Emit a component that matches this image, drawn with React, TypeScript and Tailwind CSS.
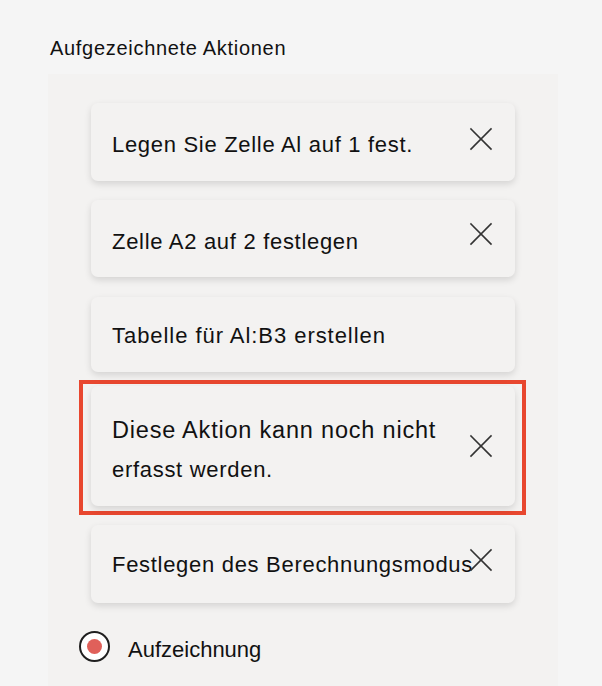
import React from "react";

const XIcon = () => (
  <svg width="24" height="24" viewBox="0 0 24 24" fill="none" stroke="#333" strokeWidth="1.6" strokeLinecap="square">
    <line x1="2" y1="2" x2="22" y2="22" />
    <line x1="22" y1="2" x2="2" y2="22" />
  </svg>
);

function Card({
  h,
  children,
  x = true,
  xTop,
  textPt,
}: {
  h: string;
  children: React.ReactNode;
  x?: boolean;
  xTop: string;
  textPt: string;
}) {
  return (
    <div
      className={`relative w-[424px] ${h} rounded-[7px] bg-[#f3f2f1] shadow-[0_3px_7px_rgba(0,0,0,0.13)]`}
    >
      <div className={`pl-[21px] ${textPt} text-[22px] tracking-[0.7px] text-[#111] whitespace-nowrap`}>{children}</div>
      {x && (
        <div className={`absolute right-[22px] ${xTop}`}>
          <XIcon />
        </div>
      )}
    </div>
  );
}

export default function App() {
  return (
    <div
      className="min-h-[686px] bg-[#f5f5f5] pt-[36px] pl-[48px] overflow-hidden"
      style={{ fontFamily: '"Liberation Sans", Arial, sans-serif' }}
    >
      <div className="pl-[2px] text-[20px] leading-[24px] tracking-[0.7px] text-[#111]">Aufgezeichnete Aktionen</div>
      <div className="mt-[14px] w-[510px] h-[612px] bg-[#f3f2f1] pt-[29px]">
        <div className="ml-[43px]">
          <Card h="h-[78px]" xTop="top-[24px]" textPt="pt-[28px] leading-[28px]">
            Legen Sie Zelle Al auf 1 fest.
          </Card>
        </div>
        <div className="ml-[43px] mt-[19px]">
          <Card h="h-[77px]" xTop="top-[22px]" textPt="pt-[28px] leading-[28px]">
            Zelle A2 auf 2 festlegen
          </Card>
        </div>
        <div className="ml-[43px] mt-[20px]">
          <Card h="h-[75px]" x={false} xTop="" textPt="pt-[25px] leading-[28px]">
            <span className="tracking-[0.95px]">Tabelle für Al:B3 erstellen</span>
          </Card>
        </div>
        <div className="ml-[31px] mt-[8px] w-[447px] border-4 border-[#e8472f] pt-[2px] pb-[5px] pl-[8px]">
          <Card h="h-[120px]" xTop="top-[48px]" textPt="pt-[25px] leading-[39px]">
            <span className="text-[23.5px] tracking-[0.8px]">Diese Aktion kann noch nicht</span>
            <br />
            erfasst werden.
          </Card>
        </div>
        <div className="ml-[43px] mt-[10px]">
          <Card h="h-[78px]" xTop="top-[23px]" textPt="pt-[26px] leading-[28px]">
            Festlegen des Berechnungsmodus
          </Card>
        </div>
        <div className="ml-[31px] mt-[25px] flex items-center">
          <div className="w-[31px] h-[31px] rounded-full border-2 border-[#1f1f1f] bg-white flex items-center justify-center">
            <div className="w-[15px] h-[15px] rounded-full bg-[#e0605a]" />
          </div>
          <div className="ml-[18px] text-[22px] leading-[28px] text-[#111] mt-[8px]">Aufzeichnung</div>
        </div>
      </div>
    </div>
  );
}
